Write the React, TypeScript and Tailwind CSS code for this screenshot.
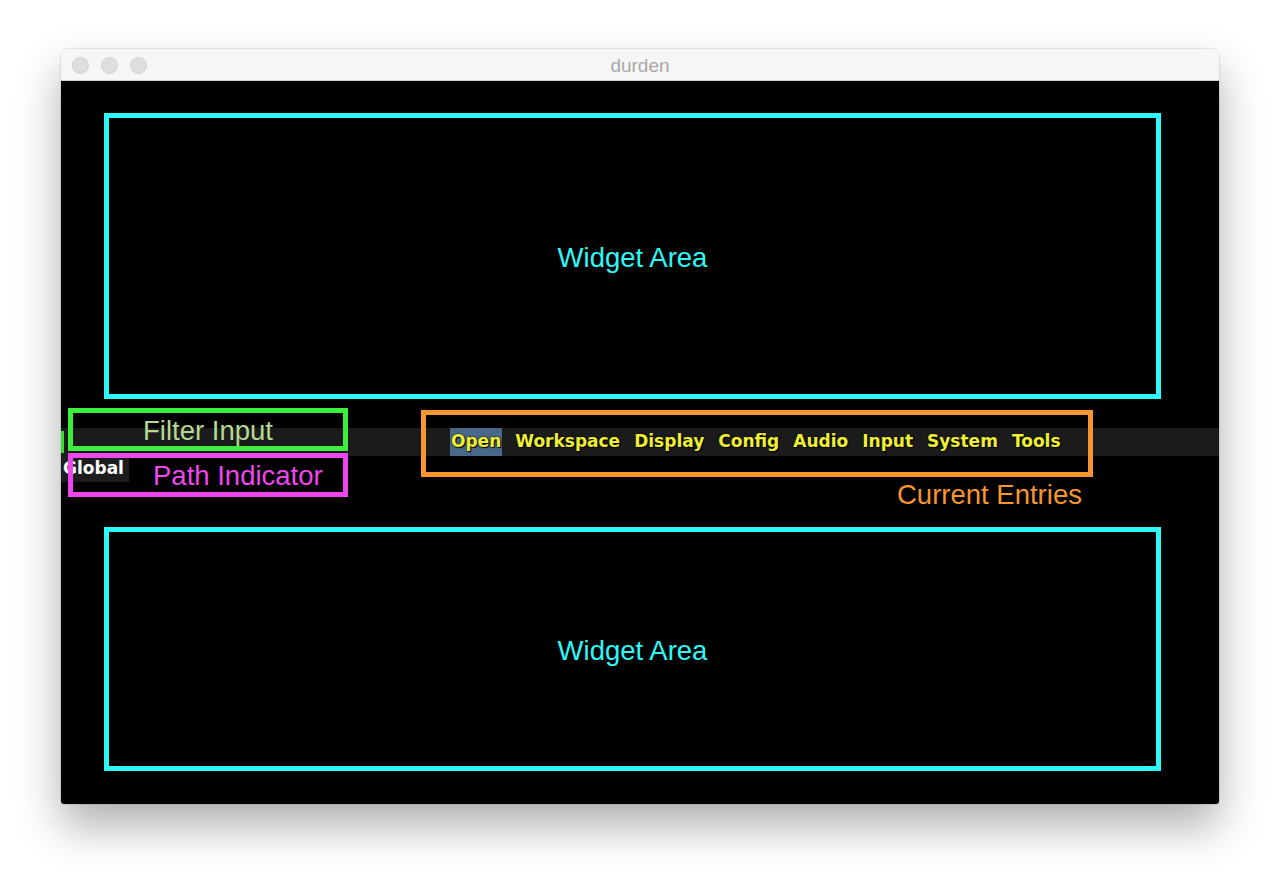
const menuEntries = ['Open', 'Workspace', 'Display', 'Config', 'Audio', 'Input', 'System', 'Tools']

const sans = "font-['Liberation_Sans',Arial,sans-serif]"
const mono = "font-['DejaVu_Sans',Verdana,sans-serif]"

function WidgetArea({ height }: { height: string }) {
  return (
    <div
      className={`ml-[43px] w-[1057px] ${height} border-[5px] border-[#2ef8f8] flex items-center justify-center pt-[4px]`}
    >
      <span className={`${sans} text-[27.5px] text-[#2ef8f8]`}>Widget Area</span>
    </div>
  )
}

export default function App() {
  return (
    <div className="min-h-screen bg-white pt-[49px]">
      {/* window */}
      <div className="mx-auto w-[1158px] rounded-t-[6px] rounded-b-[3px] shadow-[0_0_0_1px_rgba(0,0,0,0.08),0_22px_45px_rgba(0,0,0,0.32)] overflow-hidden">
        {/* title bar */}
        <div className="relative h-[32px] bg-[#f6f6f6] border-b border-[#cfcfcf] flex items-center justify-center pt-[3px]">
          <div className="absolute left-[11px] top-[8px] flex gap-[12px]">
            <span className="w-[17px] h-[17px] rounded-full bg-[#dedede] border border-[#d2d2d2]" />
            <span className="w-[17px] h-[17px] rounded-full bg-[#dedede] border border-[#d2d2d2]" />
            <span className="w-[17px] h-[17px] rounded-full bg-[#dedede] border border-[#d2d2d2]" />
          </div>
          <span className={`${sans} text-[19px] text-[#a8a8a8]`}>durden</span>
        </div>

        {/* content */}
        <div className="h-[723px] bg-black pt-[32px] flex flex-col">
          <WidgetArea height="h-[286px]" />

          {/* menu region */}
          <div className="relative h-[128px] flex flex-col">
            <div className="h-[29px]" />
            <div className="h-[28px] bg-[#1b1b1b] flex items-stretch">
              <div className="w-[3px] my-[3px] bg-[#33dd33]" />
              <div className="pl-[386px] flex items-stretch gap-[12px]">
                {menuEntries.map((entry, i) => (
                  <span
                    key={entry}
                    className={`${mono} px-px flex items-center text-[17px] font-bold text-[#f0f032] [text-shadow:0_0_2px_#000,1px_1px_1px_#000] ${
                      i === 0 ? 'bg-[#4a6888]' : ''
                    }`}
                  >
                    {entry}
                  </span>
                ))}
              </div>
            </div>
            <div className="h-[26px] flex">
              <div className="w-[68px] bg-[#1c1c1c] flex items-center pl-[2px]">
                <span className={`${mono} text-[17px] font-bold text-white`}>Global</span>
              </div>
            </div>

            {/* annotations */}
            <div className="absolute left-[7px] top-[9px] w-[280px] h-[43px] border-[5px] border-[#3cef3c] flex items-center justify-center pt-[2px]">
              <span className={`${sans} text-[27.5px] leading-none text-[#b4d892]`}>Filter Input</span>
            </div>
            <div className="absolute left-[7px] top-[54px] w-[280px] h-[44px] border-[5px] border-[#ee46ee] flex items-center pl-[80px] pt-[2px]">
              <span className={`${sans} text-[27.5px] leading-none text-[#f046f0]`}>Path Indicator</span>
            </div>
            <div className="absolute left-[360px] top-[11px] w-[672px] h-[67px] border-[5px] border-[#f7962e]" />
            <span className={`absolute left-[836px] top-[82px] ${sans} text-[27.5px] leading-none text-[#f7962e]`}>
              Current Entries
            </span>
          </div>

          <WidgetArea height="h-[244px]" />
        </div>
      </div>
    </div>
  )
}
